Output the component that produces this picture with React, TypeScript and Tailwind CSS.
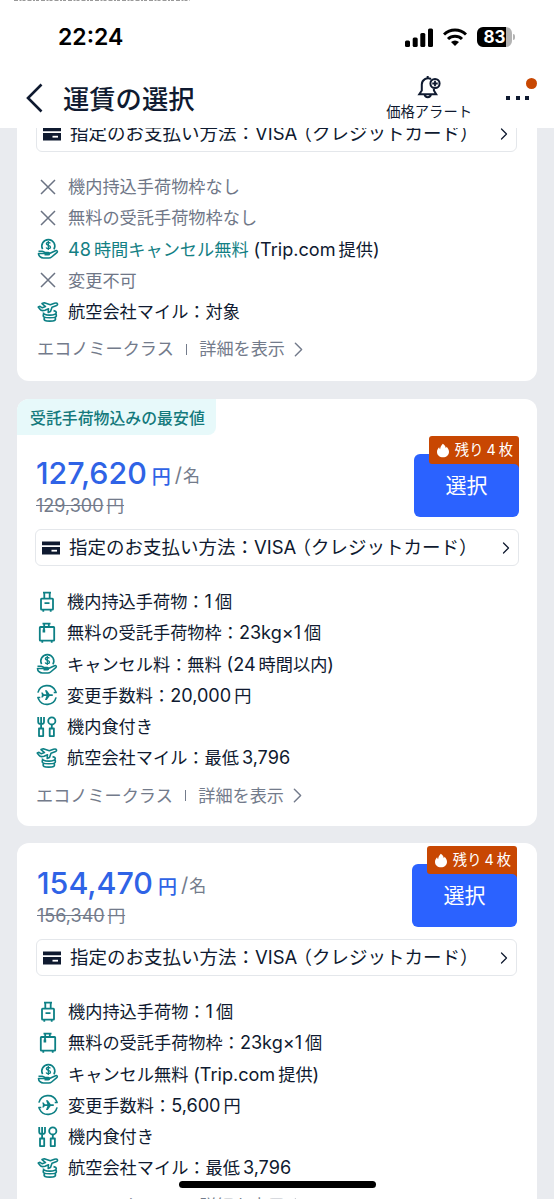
import React from 'react';
import { ChevronRight } from 'lucide-react';

type IconName = 'cross' | 'carry' | 'baggage' | 'refund' | 'change' | 'meal' | 'miles';

interface Perk {
  icon: IconName;
  text: React.ReactNode;
  tone?: 'muted' | 'normal';
}

interface Fare {
  price: string;
  oldPrice: string;
  label?: string;
  perks: Perk[];
}

// thin gap between kana/kanji and latin digits
const Gap = () => <span className="inline-block w-[3px]" />;

// latin runs are set slightly larger than the Japanese text around them
const Latin = ({ children }: { children: React.ReactNode }) => <span className="text-[18.1px] leading-none">{children}</span>;

const PerkIcon = ({ name }: { name: IconName }) => {
  if (name === 'cross') {
    return (
      <svg viewBox="0 0 22 22" className="size-[22px] shrink-0" fill="none" stroke="#6b7383" strokeWidth="1.5">
        <path d="M4 4l14 14M18 4L4 18" />
      </svg>
    );
  }
  return (
    <svg viewBox="0 0 22 22" className="size-[22px] shrink-0" fill="none" stroke="#0d8085" strokeWidth="1.8" strokeLinejoin="round">
      {name === 'carry' && (
        <>
          <path d="M7 1.6h8M8.3 2v6M13.7 2v6M8.5 12.2h5" />
          <rect x="5" y="7.6" width="12" height="11" rx="0.6" />
          <path d="M7.3 18.6v2.2M14.7 18.6v2.2" />
        </>
      )}
      {name === 'baggage' && (
        <>
          <path d="M6.5 1.6h8M8.2 1.6v3.4M12.8 1.6v3.4" />
          <rect x="3.8" y="5" width="14.4" height="13.6" rx="0.6" />
          <path d="M6.3 18.6v2.2M15.7 18.6v2.2M8 5v3" />
          <path d="M7.9 7.5v3" strokeWidth="2.6" />
        </>
      )}
      {name === 'refund' && (
        <>
          <path d="M5.6 11.2A6.5 6.5 0 1 1 16.9 11.4" strokeWidth="1.6" />
          <path d="M13.4 5.3c-.5-.7-1.2-1-2.1-1-1.2 0-2 .6-2 1.5 0 2.2 4.2 1 4.2 3.3 0 1-.9 1.6-2.1 1.6-1 0-1.9-.4-2.3-1.2M11.3 3v9" strokeWidth="1.3" />
          <path d="M1.5 13.2h3.7c1.5 0 2 1.3 3.6 1.3h2.6c1.5 0 1.5 2.2 0 2.2H7.5M12.5 15.5l6-2.8c1.6-.6 2.5 1 1.3 2l-5.2 4.3c-.8.7-1.7 1-2.7 1H6.5c-2.7 0-5-2-5-4.5z" strokeWidth="1.6" />
        </>
      )}
      {name === 'change' && (
        <>
          <path d="M1.9 8.6a9.4 9.4 0 0 1 17.6-1.6l.6 1.5h-2.4M20.1 13.4a9.4 9.4 0 0 1-17.6 1.6l-.6-1.5h2.4" strokeWidth="1.6" />
          <path d="M5.3 8.6h1.3l1.3 1.6h2.5L9 6.2h1.8l2.9 4h2.3c1.4 0 1.4 1.7 0 1.7h-2.3l-2.9 4H9l1.4-4H7.9l-1.3 1.6H5.3l.6-2.4z" fill="#0d8085" stroke="none" />
        </>
      )}
      {name === 'meal' && (
        <>
          <path d="M2.2 1v4.8c0 1.6 1 2.4 2.9 2.4S8 7.4 8 5.8V1M5.1 1v11.5" />
          <rect x="3" y="12.5" width="4.2" height="7.6" />
          <circle cx="15.8" cy="4.9" r="3.6" />
          <path d="M15.8 8.5v4" />
          <rect x="13.7" y="12.5" width="4.2" height="7.6" />
        </>
      )}
      {name === 'miles' && (
        <>
          <path d="M1.2 6L3 5.3l2.3 1.5 3.2-1.2L5 2.6l2.3-.9 6 2 4.2-1.5c3.2-1 4.2 1.6 1.500 2.600l-4 1.500-1.500 4.200-2.300.9.300-3.600-3.500 1.400c-2.300.8-4.200.3-5.200-1.200z" strokeWidth="1.600" />
          <path d="M6.300 11.500c0 3.300 13 3.600 13 .2 0-1-1-1.700-2.800-2.100M6.600 12.800c-1.400 3.600 1 4 6.200 4s7.600-.4 6.200-4M7.500 16.500c-1.400 3.200 1 3.600 5.300 3.600s6.700-.4 5.300-3.600" strokeWidth="1.600" />
        </>
      )}
    </svg>
  );
};

const PaymentRow = () => (
  <div className="flex h-[37px] items-center rounded-md border border-[#e4e7eb] pl-1.5 pr-0.5">
    <svg viewBox="0 0 18 14" className="w-[18px] h-3.5 shrink-0">
      <path d="M0 0.5h18v3.7H0zM0 6h18v7.5H0z" fill="#0f1a30" />
      <path d="M9.5 8.8h5.5v1.8H9.5z" fill="#fff" />
    </svg>
    <span className="ml-[9px] mt-px text-[18.5px] whitespace-nowrap">
      指定のお支払い方法：VISA<span className="-ml-1">（クレジットカード）</span>
    </span>
    <ChevronRight size={20} strokeWidth={1.5} className="ml-auto shrink-0" />
  </div>
);

const PerkList = ({ perks }: { perks: Perk[] }) => (
  <ul className="pl-px">
    {perks.map((perk, i) => (
      <li key={i} className={`flex h-[31.25px] items-center gap-[9px] text-[17.2px] whitespace-nowrap ${perk.tone === 'muted' ? 'text-[#6f7787]' : ''}`}>
        <PerkIcon name={perk.icon} />
        <span className="pt-px">{perk.text}</span>
      </li>
    ))}
  </ul>
);

const DetailsLink = () => (
  <div className="flex h-[43px] items-center pt-px pl-px text-[17.15px] text-[#737b8b] whitespace-nowrap">
    <span>エコノミークラス</span>
    <span className="mx-3 h-[11px] w-[1.5px] bg-[#737b8b]" />
    <span>詳細を表示</span>
    <ChevronRight size={25} strokeWidth={1.4} className="ml-px" />
  </div>
);

const SelectButton = ({ className }: { className: string }) => (
  <div className={`relative ${className}`}>
    <button className="block h-[63px] w-[105px] rounded-md bg-[#2b62ff] pt-px text-[21px] text-white">選択</button>
    <div className="absolute -top-[18px] right-0 flex h-7 w-[90px] items-center justify-end gap-1.5 rounded-t-[3px] rounded-bl-[3px] bg-[#c84702] pr-1.5 text-[14.3px] text-white whitespace-nowrap">
      <svg viewBox="0 0 14 16" className="w-3 h-[15px] shrink-0" fill="#fff">
        <path d="M6.8 0C9 1.3 10 3 10.2 5.2c.6-.4.9-1 1-1.7C13 5.2 14 7.3 14 9.5 14 13.2 11 16 7 16s-7-2.7-7-6.3C0 7.5 1 5.7 2.5 4.2c.1 1 .4 1.7 1.1 2.3C3.8 3.8 5 1.7 6.8 0z" />
      </svg>
      <span>残り<Gap />4<Gap />枚</span>
      <svg viewBox="0 0 6 5" className="absolute right-0 -bottom-[5px] w-1.5 h-[5px]">
        <path d="M0 0h6v5C6 2 4 0 0 0z" fill="#c84702" />
      </svg>
    </div>
  </div>
);

const FareCard = ({ fare }: { fare: Fare }) => (
  <section className={`rounded-xl bg-white ${fare.label ? 'px-[18px] pb-[9px]' : 'pl-[19px] pr-5'}`}>
    {fare.label && (
      <div className="-ml-[18px] flex h-9 w-[199px] items-center rounded-tl-xl rounded-br-lg bg-[#e7f9fa] pt-[3px] pl-[13px] text-[15.9px] font-medium text-[#14797c]">
        {fare.label}
      </div>
    )}
    <div className={`flex items-start justify-between ${fare.label ? 'h-[94px]' : 'h-24'}`}>
      <div className={fare.label ? 'pt-[18px] pl-px' : 'pt-5 pl-px'}>
        <div className="flex h-10 items-baseline leading-10 whitespace-nowrap">
          <span className="text-[30.4px] font-medium text-[#2f63e6]">{fare.price}</span>
          <span className="ml-[5px] text-[19px] font-medium text-[#2f63e6]">円</span>
          <span className="relative -top-0.5 ml-1 text-[17px] text-[#737b8b]"><span className="text-[20px] leading-none">/</span><span className="ml-px">名</span></span>
        </div>
        <div className="h-6 pt-px text-[18px] leading-6 text-[#737b8b] line-through">
          {fare.oldPrice}<Gap /><span className="text-[17.5px]">円</span>
        </div>
      </div>
      <SelectButton className={fare.label ? 'mt-[19px]' : 'mt-[21px]'} />
    </div>
    <PaymentRow />
    <div className="h-5" />
    <PerkList perks={fare.perks} />
    <DetailsLink />
  </section>
);

const StatusBar = () => (
  <div className="flex h-[74px] items-center justify-between pl-[58px] pr-[39px] text-black">
    <span className="text-[23px] font-semibold">22:24</span>
    <div className="flex items-center gap-2.5">
      <svg viewBox="0 0 28 19" className="w-7 h-[19px]">
        <rect x="0" y="12.5" width="5" height="6.5" rx="1.5" />
        <rect x="7.7" y="9.5" width="5" height="9.5" rx="1.5" />
        <rect x="15.3" y="5" width="5" height="14" rx="1.5" />
        <rect x="23" y="0.5" width="5" height="18.5" rx="1.5" />
      </svg>
      <svg viewBox="0 0 24 18" className="w-6 h-[18px]" fill="none" stroke="#000" strokeWidth="3">
        <path d="M1 6.5a15.8 15.8 0 0 1 22 0M5 11a10 10 0 0 1 14 0" />
        <path d="M12 18l-4-4a6 6 0 0 1 8 0z" fill="#000" stroke="none" />
      </svg>
      <div className="flex items-center">
        <div className="flex h-5 w-[35px] items-center justify-center rounded-[6px] bg-linear-to-r from-black from-83% to-[#b3b3b3] to-83% pt-px text-[17px] font-bold text-white">83</div>
        <div className="ml-px h-1.5 w-0.5 rounded-r bg-[#b3b3b3]" />
      </div>
    </div>
  </div>
);

const Header = () => (
  <header className="relative h-32 shrink-0 bg-white">
    <svg viewBox="0 0 176 2" className="absolute top-0 left-3.5 h-0.5 w-44">
      <path d="M0 0.5h176" stroke="#999" strokeWidth="1" strokeDasharray="4 1.5 2 1 3 2" />
    </svg>
    <StatusBar />
    <div className="flex h-[54px] pl-[25px] pr-[25px]">
      <svg viewBox="0 0 18 30" className="mt-[9px] w-[18px] h-[30px]" fill="none" stroke="#0f1a30" strokeWidth="2.6">
        <path d="M16.5 1.5L3 15l13.5 13.5" />
      </svg>
      <h1 className="ml-5 mt-[7px] text-[26.3px] leading-[38px] font-medium">運賃の選択</h1>
      <div className="ml-auto flex flex-col items-center">
        <svg viewBox="0 0 24 24" className="mt-px size-6" fill="none" stroke="#0f1a30" strokeWidth="2">
          <path d="M14 4A6.3 6.3 0 0 0 4.8 9.5v6L2.3 19.2h16.9l-2.3-3.7V14M10.7 1v2.5" />
          <path d="M7.6 19.5a3.2 3.2 0 0 0 6.3 0" />
          <circle cx="18" cy="8.5" r="4.6" />
          <path d="M18 5.8v5.4M15.3 8.5h5.4" strokeWidth="1.8" />
        </svg>
        <span className="text-[14.3px] leading-[26px] whitespace-nowrap">価格アラート</span>
      </div>
      <div className="relative ml-[34px] mt-[22px] flex h-1 gap-[5.5px]">
        <span className="size-1 bg-[#0f1a30]" />
        <span className="size-1 bg-[#0f1a30]" />
        <span className="size-1 bg-[#0f1a30]" />
        <span className="absolute -top-[18px] left-5 size-[11px] rounded-full bg-[#c84702]" />
      </div>
    </div>
  </header>
);

const firstPerks: Perk[] = [
  { icon: 'cross', tone: 'muted', text: '機内持込手荷物枠なし' },
  { icon: 'cross', tone: 'muted', text: '無料の受託手荷物枠なし' },
  {
    icon: 'refund',
    text: <><span className="text-[#148084]"><Latin>48</Latin><Gap />時間キャンセル無料</span> <Latin>(Trip.com</Latin><Gap />提供<Latin>)</Latin></>,
  },
  { icon: 'cross', tone: 'muted', text: '変更不可' },
  { icon: 'miles', text: '航空会社マイル：対象' },
];

const fares: Fare[] = [
  {
    price: '127,620',
    oldPrice: '129,300',
    label: '受託手荷物込みの最安値',
    perks: [
      { icon: 'carry', text: <>機内持込手荷物：<Latin>1</Latin><Gap />個</> },
      { icon: 'baggage', text: <>無料の受託手荷物枠：<Latin>23kg×1</Latin><Gap />個</> },
      { icon: 'refund', text: <>キャンセル料：無料 <Latin>(24</Latin><Gap />時間以内<Latin>)</Latin></> },
      { icon: 'change', text: <>変更手数料：<Latin>20,000</Latin><Gap />円</> },
      { icon: 'meal', text: '機内食付き' },
      { icon: 'miles', text: <>航空会社マイル：最低<Gap /><Latin>3,796</Latin></> },
    ],
  },
  {
    price: '154,470',
    oldPrice: '156,340',
    perks: [
      { icon: 'carry', text: <>機内持込手荷物：<Latin>1</Latin><Gap />個</> },
      { icon: 'baggage', text: <>無料の受託手荷物枠：<Latin>23kg×1</Latin><Gap />個</> },
      { icon: 'refund', text: <>キャンセル無料 <Latin>(Trip.com</Latin><Gap />提供<Latin>)</Latin></> },
      { icon: 'change', text: <>変更手数料：<Latin>5,600</Latin><Gap />円</> },
      { icon: 'meal', text: '機内食付き' },
      { icon: 'miles', text: <>航空会社マイル：最低<Gap /><Latin>3,796</Latin></> },
    ],
  },
];

const App: React.FC = () => (
  <div className="relative flex h-[1199px] w-[554px] flex-col overflow-hidden bg-[#e9ebef] font-['Inter','Noto_Sans_CJK_JP',sans-serif] text-[#0f1a30]" lang="ja">
    <Header />
    <main className="flex flex-1 flex-col overflow-hidden px-[17px]">
      <section className="h-[253px] shrink-0 rounded-b-xl bg-white pl-[19px] pr-5">
        <div className="-mt-[13px]"><PaymentRow /></div>
        <div className="h-[19px]" />
        <PerkList perks={firstPerks} />
        <DetailsLink />
      </section>
      <div className="mt-[18px] h-[427px] shrink-0"><FareCard fare={fares[0]} /></div>
      <div className="mt-[17px] shrink-0"><FareCard fare={fares[1]} /></div>
    </main>
    <div className="absolute bottom-[11px] left-[179px] h-[7px] w-[197px] rounded-full bg-black" />
  </div>
);

export default App;
